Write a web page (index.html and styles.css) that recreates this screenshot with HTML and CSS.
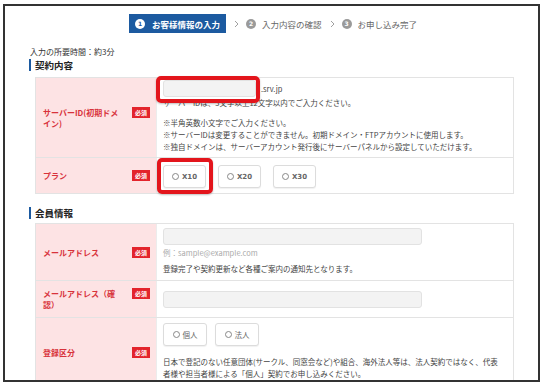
FILE: index.html
```html
<!DOCTYPE html>
<html lang="ja">
<head>
    <meta charset="UTF-8">
    <meta name="viewport" content="width=device-width, initial-scale=1.0">
    <title>お客様情報の入力</title>
    <link rel="stylesheet" href="styles.css">
</head>
<body>
    <div class="shot">
        <!-- Steps -->
        <ol class="steps">
            <li class="step active"><span class="num">1</span>お客様情報の入力</li>
            <li class="sep"><svg width="5" height="8" viewBox="0 0 5 8"><polyline points="1,1 4,4 1,7" fill="none" stroke="#a0a0a0" stroke-width="1"/></svg></li>
            <li class="step"><span class="num">2</span>入力内容の確認</li>
            <li class="sep"><svg width="5" height="8" viewBox="0 0 5 8"><polyline points="1,1 4,4 1,7" fill="none" stroke="#a0a0a0" stroke-width="1"/></svg></li>
            <li class="step"><span class="num">3</span>お申し込み完了</li>
        </ol>

        <div class="content">
            <p class="duration">入力の所要時間：約3分</p>

            <h2 class="section-title">契約内容</h2>
            <div class="form-table">
                <div class="form-row">
                    <div class="label-cell">
                        <div class="label-inner"><span class="label">サーバーID(初期ドメイン)</span><span class="req">必須</span></div>
                    </div>
                    <div class="field-cell id-cell">
                        <div class="domain"><span class="input short"></span><span>.srv.jp</span></div>
                        <p class="note">サーバーIDは、3文字以上12文字以内でご入力ください。</p>
                        <div class="notes">
                            <p class="note">※半角英数小文字でご入力ください。</p>
                            <p class="note">※サーバーIDは変更することができません。初期ドメイン・FTPアカウントに使用します。</p>
                            <p class="note">※独自ドメインは、サーバーアカウント発行後にサーバーパネルから設定していただけます。</p>
                        </div>
                    </div>
                </div>
                <div class="form-row">
                    <div class="label-cell">
                        <div class="label-inner"><span class="label">プラン</span><span class="req">必須</span></div>
                    </div>
                    <div class="field-cell plan-cell">
                        <div class="choices plans">
                            <span class="choice"><i class="radio"></i>X10</span>
                            <span class="choice"><i class="radio"></i>X20</span>
                            <span class="choice"><i class="radio"></i>X30</span>
                        </div>
                    </div>
                </div>
            </div>

            <h2 class="section-title second">会員情報</h2>
            <div class="form-table">
                <div class="form-row">
                    <div class="label-cell">
                        <div class="label-inner"><span class="label">メールアドレス</span><span class="req">必須</span></div>
                    </div>
                    <div class="field-cell mail-cell">
                        <span class="input wide"></span>
                        <p class="note hint">例：sample@example.com</p>
                        <p class="note info">登録完了や契約更新など各種ご案内の通知先となります。</p>
                    </div>
                </div>
                <div class="form-row">
                    <div class="label-cell confirm">
                        <div class="label-inner"><span class="label">メールアドレス（確認）</span><span class="req">必須</span></div>
                    </div>
                    <div class="field-cell">
                        <span class="input wide"></span>
                    </div>
                </div>
                <div class="form-row">
                    <div class="label-cell">
                        <div class="label-inner"><span class="label">登録区分</span><span class="req">必須</span></div>
                    </div>
                    <div class="field-cell type-cell">
                        <div class="choices types">
                            <span class="choice"><i class="radio"></i>個人</span>
                            <span class="choice"><i class="radio"></i>法人</span>
                        </div>
                        <p class="note type-note">日本で登記のない任意団体(サークル、同窓会など)や組合、海外法人等は、法人契約ではなく、代表者様や担当者様による「個人」契約でお申し込みください。</p>
                    </div>
                </div>
            </div>
        </div>

        <!-- red annotation frames -->
        <div class="mark mark-id"></div>
        <div class="mark mark-plan"></div>
    </div>
</body>
</html>
```

FILE: styles.css
```css
* {
    box-sizing: border-box;
}

body {
    margin: 0;
    background: #fff;
    font-family: "Noto Sans CJK JP", "Noto Sans", sans-serif;
    color: #333;
}

p {
    margin: 0;
}

.shot {
    position: relative;
    width: 537px;
    height: 378px;
    margin: 4px 0 0 3px;
    border: 2px solid #333;
    background: #fff;
    overflow: hidden;
}

/* Steps */
.steps {
    display: flex;
    justify-content: center;
    align-items: center;
    list-style: none;
    height: 19px;
    margin: 8px 0 0 3px;
    padding: 0;
}

.step {
    display: flex;
    align-items: center;
    height: 19px;
    font-size: 8.5px;
    color: #666;
}

.step .num {
    display: flex;
    align-items: center;
    justify-content: center;
    width: 10px;
    height: 10px;
    margin-right: 6px;
    border-radius: 50%;
    background: #9a9a9a;
    color: #fff;
    font-family: "DejaVu Sans", sans-serif;
    font-size: 6px;
    font-weight: bold;
}

.step.active {
    padding: 0 6px;
    background: #1c5aa0;
    color: #fff;
    font-weight: bold;
}

.step.active .num {
    margin-right: 7px;
    background: #fff;
    color: #1c5aa0;
}

.sep {
    display: flex;
    align-items: center;
    margin: 0 7px 0 8px;
}

/* Content */
.content {
    padding: 0 24px;
}

.duration {
    margin-top: 13px;
    padding-left: 1px;
    font-size: 8px;
    line-height: 12px;
}

.section-title {
    margin: 1px 0 0;
    padding-left: 4px;
    border-left: 2px solid #1c5aa0;
    font-size: 9.5px;
    line-height: 12px;
    height: 12px;
    color: #222;
}

.section-title.second {
    margin-top: 13px;
}

.form-table {
    margin: 6px 0 0 6px;
    border: 1px solid #e3e3e3;
    border-bottom: 0;
}

.section-title.second + .form-table {
    margin-top: 4px;
}

.form-row {
    display: grid;
    grid-template-columns: 120px 1fr;
    border-bottom: 1px solid #e3e3e3;
}

.label-cell {
    display: flex;
    align-items: center;
    padding: 0 6px 0 7px;
    background: #fde3e4;
}

.label-cell.confirm {
    padding-top: 7px;
    padding-bottom: 7px;
}

.label-inner {
    display: flex;
    justify-content: space-between;
    align-items: flex-start;
    width: 100%;
}

.label {
    width: 78px;
    font-size: 8px;
    line-height: 11px;
    font-weight: bold;
    color: #d8323b;
}

.req {
    width: 18px;
    height: 11px;
    background: #e3242c;
    color: #fff;
    font-size: 6px;
    line-height: 11px;
    font-weight: bold;
    text-align: center;
}

.field-cell {
    display: flex;
    flex-direction: column;
    justify-content: center;
    align-items: flex-start;
    padding: 0 14px 0 6px;
    border-left: 1px solid #ececec;
    background: #fff;
}

.note {
    font-size: 7.5px;
    line-height: 12px;
    color: #444;
}

.input {
    display: block;
    height: 17px;
    border: 1px solid #e2e2e2;
    border-radius: 3px;
    background: #f3f3f3;
}

.input.short {
    width: 93px;
}

.input.wide {
    width: 259px;
}

.id-cell {
    padding-top: 2px;
    padding-bottom: 4px;
}

.domain {
    display: flex;
    align-items: center;
    gap: 5px;
    font-size: 7.5px;
    color: #444;
}

.notes {
    margin-top: 8px;
}

.mail-cell {
    padding-top: 4px;
    padding-bottom: 5px;
}

.hint {
    margin-top: 2px;
    color: #aaa;
}

.info {
    margin-top: 4px;
}

/* Radio choices */
.choices {
    display: flex;
}

.plans {
    gap: 12px;
}

.types {
    gap: 8px;
}

.plan-cell {
    padding-top: 7px;
    padding-bottom: 5px;
}

.type-cell {
    justify-content: flex-start;
    padding-top: 5px;
    padding-bottom: 7px;
}

.choice {
    display: flex;
    align-items: center;
    justify-content: center;
    width: 43px;
    height: 23px;
    border: 1px solid #dcdcdc;
    border-radius: 3px;
    background: #fff;
    box-shadow: 0 1px 1px rgba(0, 0, 0, 0.06);
    font-family: "DejaVu Sans", sans-serif;
    font-size: 7px;
    font-weight: bold;
    color: #666;
}

.types .choice {
    width: 44px;
    font-family: "Noto Sans CJK JP", sans-serif;
    font-size: 7.5px;
    font-weight: normal;
}

.radio {
    width: 7px;
    height: 7px;
    margin-right: 3px;
    border: 1px solid #888;
    border-radius: 50%;
}

.type-note {
    margin-top: 10px;
    line-height: 11.5px;
}

/* Annotation frames */
.mark {
    position: absolute;
    border: 4px solid #e3151c;
    border-radius: 5px;
    box-shadow: 0 1px 2px rgba(0, 0, 0, 0.25);
}

.mark-id {
    left: 151px;
    top: 70px;
    width: 104px;
    height: 27px;
}

.mark-plan {
    left: 152px;
    top: 152px;
    width: 56px;
    height: 36px;
}
```
